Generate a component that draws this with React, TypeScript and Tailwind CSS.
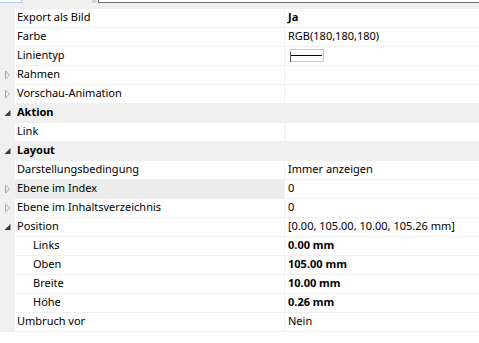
import React from 'react';

type Row = {
  label: string;
  value?: React.ReactNode;
  kind?: 'category' | 'item';
  toggle?: 'open' | 'closed';
  indent?: boolean;
  bold?: boolean;
  highlight?: boolean;
};

const LineStyle = () => (
  <div className="relative ml-[2px] mt-[2px] w-[34px] h-[13px] border border-[#c8c8c8] bg-white">
    <div className="absolute left-0 right-[1px] top-[5px] h-[1px] bg-black" />
    <div className="absolute left-[-1px] top-[2px] bottom-[-1px] w-[1px] bg-[#555]" />
  </div>
);

const rows: Row[] = [
  { label: 'Export als Bild', value: 'Ja', bold: true },
  { label: 'Farbe', value: 'RGB(180,180,180)' },
  { label: 'Linientyp', value: <LineStyle /> },
  { label: 'Rahmen', toggle: 'closed' },
  { label: 'Vorschau-Animation', toggle: 'closed' },
  { label: 'Aktion', kind: 'category', toggle: 'open' },
  { label: 'Link' },
  { label: 'Layout', kind: 'category', toggle: 'open' },
  { label: 'Darstellungsbedingung', value: 'Immer anzeigen' },
  { label: 'Ebene im Index', value: '0', toggle: 'closed', highlight: true },
  { label: 'Ebene im Inhaltsverzeichnis', value: '0', toggle: 'closed' },
  { label: 'Position', value: '[0.00, 105.00, 10.00, 105.26 mm]', toggle: 'open' },
  { label: 'Links', value: '0.00 mm', indent: true, bold: true },
  { label: 'Oben', value: '105.00 mm', indent: true, bold: true },
  { label: 'Breite', value: '10.00 mm', indent: true, bold: true },
  { label: 'Höhe', value: '0.26 mm', indent: true, bold: true },
  { label: 'Umbruch vor', value: 'Nein' },
];

const Toggle = ({ state }: { state?: 'open' | 'closed' }) => {
  if (state === 'open') {
    return (
      <svg width="15" height="18" viewBox="0 0 15 18">
        <path d="M10.5 6 L10.5 12 L4.5 12 Z" fill="#3c3c3c" />
      </svg>
    );
  }
  if (state === 'closed') {
    return (
      <svg width="15" height="18" viewBox="0 0 15 18">
        <path d="M5.5 5 L5.5 13 L9.5 9 Z" fill="none" stroke="#a6a6a6" strokeWidth="1" />
      </svg>
    );
  }
  return null;
};

export default function App() {
  return (
    <div
      className="w-[479px] h-[343px] overflow-hidden bg-white text-[11px] text-black"
      style={{ fontFamily: '"Noto Sans", "Open Sans", sans-serif' }}
    >
      {/* remains of the toolbar above the grid */}
      <div className="flex h-[8px] bg-[#f0f0f0]">
        <div className="w-[22px] h-[3px] bg-white border-b border-r border-[#a9cdee]" />
        <div className="w-[70px]" />
        <div className="w-[4px] h-[3px] bg-[#d4d4d4]" />
        <div className="w-[2px]" />
        <div className="flex-1 h-[3px] bg-white border-l border-b border-[#6e6e6e]" />
      </div>
      <div className="h-[1px] bg-[#f0f0f0]" />

      <div className="flex flex-col">
        {rows.map((row) => {
          const isCat = row.kind === 'category';
          return (
            <div
              key={row.label}
              className={`flex h-[19px] border-b border-[#f0f0f0] ${isCat ? 'bg-[#f0f0f0]' : ''}`}
            >
              <div className="w-[15px] shrink-0 bg-[#f0f0f0] flex items-start">
                <Toggle state={row.toggle} />
              </div>
              {isCat ? (
                <div className="flex-1 pl-[2px] font-bold leading-[16px]">{row.label}</div>
              ) : (
                <>
                  <div
                    className={`w-[270px] shrink-0 border-r border-[#f0f0f0] leading-[16px] ${
                      row.indent ? 'pl-[18px]' : 'pl-[2px]'
                    } ${row.highlight ? 'bg-[#ececec]' : ''}`}
                  >
                    {row.label}
                  </div>
                  <div
                    className={`flex-1 pl-[3px] flex items-start leading-[16px] ${row.bold ? 'font-bold' : ''}`}
                  >
                    {row.value}
                  </div>
                </>
              )}
            </div>
          );
        })}
      </div>
    </div>
  );
}
